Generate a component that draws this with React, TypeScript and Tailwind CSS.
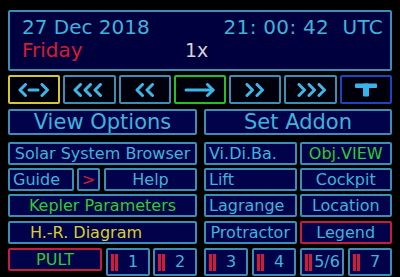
import type { ReactNode } from 'react';

const font = "font-['DejaVu_Sans',sans-serif]";
const cyanBorder = 'border-[#3b8fb6]';
const redBorder = 'border-[#c41e3a]';

const Box = ({ className = '', children }: { className?: string; children?: ReactNode }) => (
  <div className={`flex h-full items-center rounded-[2px] border-2 bg-[#02024a] leading-none ${className}`}>
    {children}
  </div>
);

const Num = ({ n }: { n: string }) => (
  <div className={`flex h-full items-center rounded-[2px] border-2 ${cyanBorder} bg-[#02024a] pl-[3px]`}>
    <div className="flex h-[17px] gap-[1px]">
      <span className="w-[3px] bg-[#d01c38]" />
      <span className="w-[3px] bg-[#d01c38]" />
    </div>
    <span className="flex-1 text-center text-[#3db4dc]">{n}</span>
  </div>
);

// left-pointing chevron at x offset
const ChevL = ({ x }: { x: number }) => (
  <polyline points={`${x + 7.5},1.5 ${x + 2},7 ${x + 7.5},12.5`} />
);
const ChevR = ({ x }: { x: number }) => (
  <polyline points={`${x + 2},1.5 ${x + 7.5},7 ${x + 2},12.5`} />
);

const Icon = ({ w, children }: { w: number; children: ReactNode }) => (
  <svg
    width={w}
    height="14"
    viewBox={`0 0 ${w} 14`}
    fill="none"
    stroke="#3db8e6"
    strokeWidth="3"
    strokeLinecap="round"
    strokeLinejoin="round"
  >
    {children}
  </svg>
);

const NavBtn = ({ className, children }: { className: string; children: ReactNode }) => (
  <div className={`flex items-center justify-center rounded-[2px] border-2 bg-[#00000c] ${className}`}>
    {children}
  </div>
);

export default function App() {
  return (
    <div className={`flex h-[277px] w-[400px] flex-col bg-black pl-[8px] pr-[8px] pt-[10px] ${font}`}>
      {/* clock panel */}
      <div className={`h-[61px] rounded-[2px] border-2 ${cyanBorder} bg-[#00003e] pl-[12px] pr-[7px] pt-[4px] text-[20px] leading-[23px]`}>
        <div className="flex justify-between text-[#3db4dc]">
          <span>27 Dec 2018</span>
          <span className="whitespace-pre tracking-[0.3px]">21: 00: 42  UTC</span>
        </div>
        <div className="flex">
          <span className="w-[163px] text-[#d41e30]">Friday</span>
          <span className="text-[19px] text-[#d4d4d4]">1x</span>
        </div>
      </div>

      {/* time controls */}
      <div className="mt-[4px] grid h-[29px] grid-cols-7 gap-[3px]">
        <NavBtn className="border-[#d6c82c]">
          <Icon w={32}>
            <ChevL x={0} />
            <line x1="11" y1="7" x2="20" y2="7" />
            <ChevR x={22} />
          </Icon>
        </NavBtn>
        <NavBtn className={cyanBorder}>
          <Icon w={32}>
            <ChevL x={0} />
            <ChevL x={10} />
            <ChevL x={20} />
          </Icon>
        </NavBtn>
        <NavBtn className={cyanBorder}>
          <Icon w={22}>
            <ChevL x={1} />
            <ChevL x={11} />
          </Icon>
        </NavBtn>
        <NavBtn className="border-[#24c024]">
          <Icon w={32}>
            <line x1="2" y1="7" x2="29" y2="7" />
            <polyline points="23.5,1.5 29,7 23.5,12.5" />
          </Icon>
        </NavBtn>
        <NavBtn className={cyanBorder}>
          <Icon w={22}>
            <ChevR x={1} />
            <ChevR x={11} />
          </Icon>
        </NavBtn>
        <NavBtn className={cyanBorder}>
          <Icon w={32}>
            <ChevR x={2} />
            <ChevR x={12} />
            <ChevR x={22} />
          </Icon>
        </NavBtn>
        <NavBtn className="border-[#1c44c8]">
          <svg width="22" height="14" viewBox="0 0 22 14">
            <rect x="0" y="0.5" width="22" height="4.5" rx="1" fill="#36b4ec" />
            <rect x="8" y="0.5" width="6" height="13" rx="1" fill="#36b4ec" />
          </svg>
        </NavBtn>
      </div>

      {/* main menu */}
      <div className="mt-[5px] flex h-[26px] gap-[7px] text-[21px] text-[#3db4dc]">
        <Box className={`w-[189px] justify-center ${cyanBorder}`}>View Options</Box>
        <Box className={`flex-1 justify-center ${cyanBorder}`}>Set Addon</Box>
      </div>

      <div className="mt-[7px] flex flex-col text-[16px] text-[#3db4dc]">
        <div className="flex h-[23px] gap-[7px]">
          <Box className={`w-[189px] justify-center ${cyanBorder}`}>Solar System Browser</Box>
          <div className="grid flex-1 grid-cols-2 gap-[3px]">
            <Box className={`pl-[3px] ${cyanBorder}`}>Vi.Di.Ba.</Box>
            <Box className={`justify-center text-[#2fcc2f] ${cyanBorder}`}>Obj.VIEW</Box>
          </div>
        </div>

        <div className="mt-[3px] flex h-[23px] gap-[7px]">
          <div className="flex w-[189px] gap-[3px]">
            <Box className={`w-[66px] pl-[3px] ${cyanBorder}`}>Guide</Box>
            <Box className={`w-[23px] justify-center text-[#d41e36] ${cyanBorder}`}>&gt;</Box>
            <Box className={`ml-[1px] flex-1 justify-center ${cyanBorder}`}>Help</Box>
          </div>
          <div className="grid flex-1 grid-cols-2 gap-[3px]">
            <Box className={`pl-[3px] ${cyanBorder}`}>Lift</Box>
            <Box className={`justify-center ${cyanBorder}`}>Cockpit</Box>
          </div>
        </div>

        <div className="mt-[3px] flex h-[23px] gap-[7px]">
          <Box className={`w-[189px] justify-center text-[#2fcc2f] ${cyanBorder}`}>Kepler Parameters</Box>
          <div className="grid flex-1 grid-cols-2 gap-[3px]">
            <Box className={`pl-[3px] ${cyanBorder}`}>Lagrange</Box>
            <Box className={`justify-center ${cyanBorder}`}>Location</Box>
          </div>
        </div>

        <div className="mt-[4px] flex h-[23px] gap-[7px]">
          <Box className={`w-[189px] pl-[20px] text-[#d6cf2e] ${cyanBorder}`}>H.-R. Diagram</Box>
          <div className="grid flex-1 grid-cols-2 gap-[3px]">
            <Box className={`justify-center ${cyanBorder}`}>Protractor</Box>
            <Box className={`justify-center ${redBorder}`}>Legend</Box>
          </div>
        </div>

        <div className="mt-[4px] flex h-[23px] gap-[7px]">
          <div className="flex w-[189px] gap-[4px]">
            <Box className={`w-[94px] justify-center text-[#2fcc2f] ${redBorder}`}>PULT</Box>
            <div className="grid flex-1 grid-cols-2 gap-[3px]">
              <Num n="1" />
              <Num n="2" />
            </div>
          </div>
          <div className="grid flex-1 grid-cols-4 gap-[4px]">
            <Num n="3" />
            <Num n="4" />
            <Num n="5/6" />
            <Num n="7" />
          </div>
        </div>
      </div>
    </div>
  );
}
